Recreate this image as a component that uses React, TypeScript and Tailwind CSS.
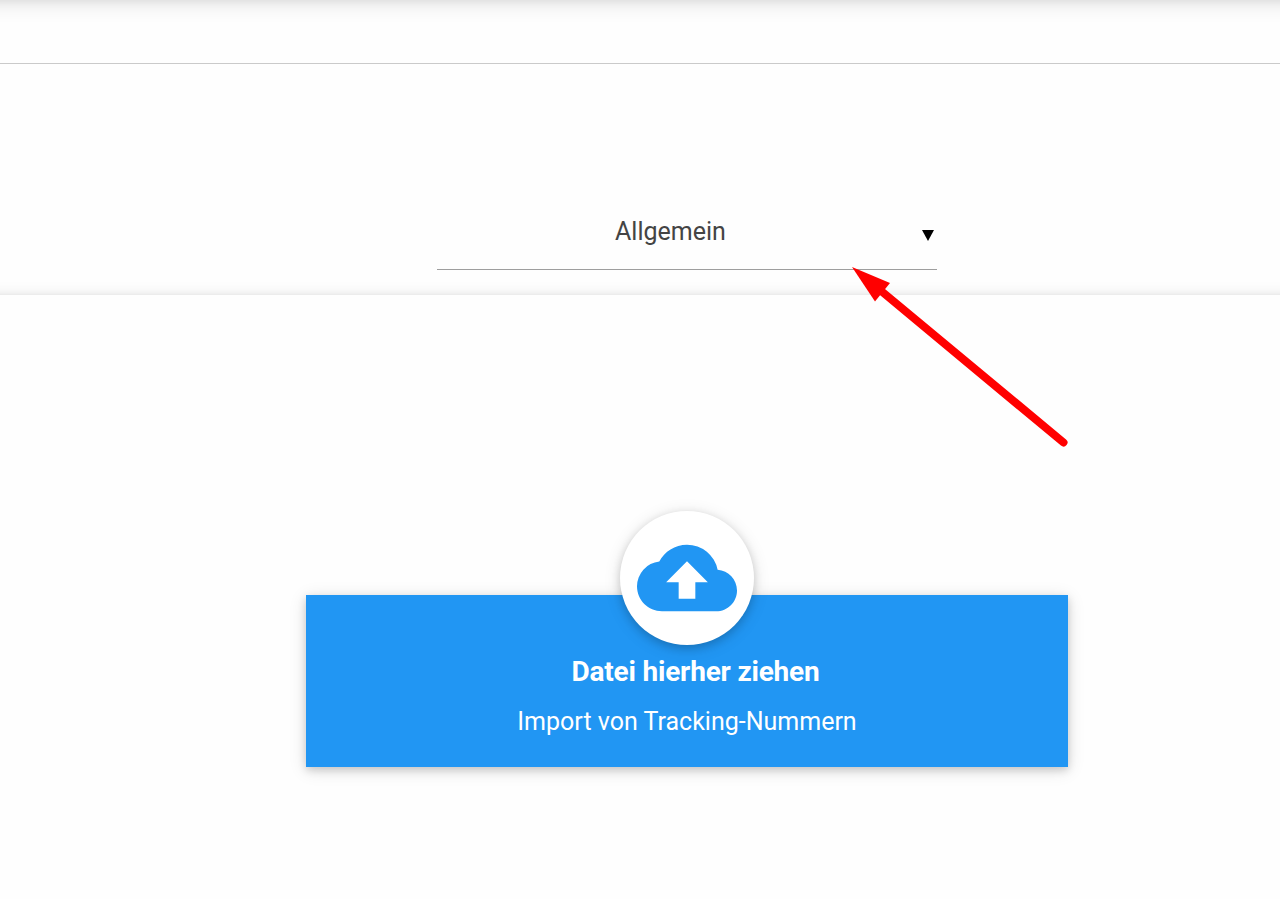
import { MdCloudUpload } from "react-icons/md";

export default function App() {
  return (
    <div className="relative flex h-[899px] w-[1280px] flex-col overflow-hidden bg-[#fefefe] font-['Roboto',sans-serif]">
      <header className="-mx-8 -mt-16 h-16 shrink-0 shadow-[0_2px_8px_rgba(0,0,0,0.05),0_3px_20px_rgba(0,0,0,0.12)]" />
      <div className="h-16 shrink-0 border-b border-[#cacaca]" />

      <section className="flex h-[231px] shrink-0 flex-col">
        <button
          type="button"
          className="mt-[129px] ml-[437px] flex h-[77px] w-[500px] items-start justify-between border-b border-[#9e9e9e] text-[25px] text-[#444]"
        >
          <span className="ml-[178px] leading-[77px]">Allgemein</span>
          <svg className="mt-[37px] mr-[3px] h-[11px] w-3" viewBox="0 0 12 11">
            <path d="M0 0h12L6 11z" fill="#000" />
          </svg>
        </button>
      </section>

      <main className="-mx-8 flex grow flex-col items-start bg-[#fefefe] pt-[300px] pl-[338px] shadow-[0_3px_8px_rgba(0,0,0,0.16),0_3px_17px_rgba(0,0,0,0.12)]">
        <div className="flex h-[172px] w-[762px] flex-col items-center bg-[#2196f3] text-white shadow-[0_3px_8px_rgba(0,0,0,0.16),0_3px_17px_rgba(0,0,0,0.12)]">
          <div className="-mt-[84px] flex size-[134px] shrink-0 items-center justify-center rounded-full bg-white shadow-[0_3px_8px_rgba(0,0,0,0.16),0_3px_17px_rgba(0,0,0,0.12)]">
            <MdCloudUpload className="size-[100px] text-[#2196f3]" />
          </div>
          <h2 className="mt-[10px] ml-[17px] text-[28px] leading-[33px] font-bold tracking-[-0.2px]">
            Datei hierher ziehen
          </h2>
          <p className="mt-[19px] text-[25px] leading-[30px]">
            Import von Tracking-Nummern
          </p>
        </div>
      </main>

      {/* pointer to the select */}
      <svg
        className="pointer-events-none absolute top-[255px] left-[840px]"
        width="240"
        height="200"
        viewBox="0 0 240 200"
      >
        <path d="M40 35L223.500 187.500" stroke="#f00" strokeWidth="8" strokeLinecap="round" />
        <path d="M12 12L50 28L35 46.500z" fill="#f00" />
      </svg>
    </div>
  );
}
